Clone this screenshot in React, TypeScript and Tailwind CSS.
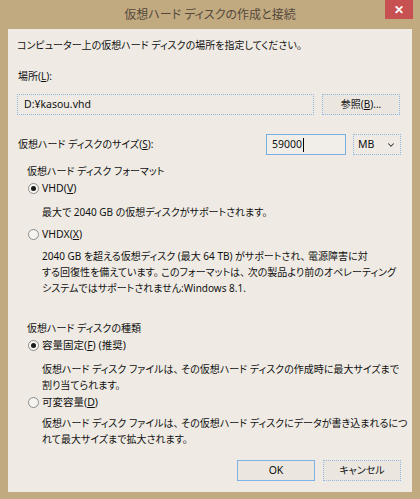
import { ChevronDown } from 'lucide-react';

const font = { fontFamily: '"Noto Sans", "Noto Sans CJK JP", sans-serif' };

function Radio({ checked, label, u, rest }: { checked: boolean; label: string; u: string; rest: string }) {
  return (
    <div className="flex items-center h-[17px] pl-[11px]">
      <span className="w-[11px] h-[11px] rounded-full border border-[#8a8a8a] bg-[#f7f5f1] flex items-center justify-center">
        {checked && <span className="w-[5px] h-[5px] rounded-full bg-[#1a1a1a]" />}
      </span>
      <span className="ml-[3px] text-[10.5px]">
        {label}(<span className="underline">{u}</span>){rest}
      </span>
    </div>
  );
}

function Line({ children }: { children: React.ReactNode }) {
  return <div className="h-[16px] leading-[16px] pl-[25px] whitespace-nowrap">{children}</div>;
}

export default function App() {
  return (
    <div
      style={font}
      className="w-[420px] h-[499px] bg-[#c2aa80] flex flex-col text-[10px] text-[#111] [font-feature-settings:'palt'] overflow-hidden"
    >
      {/* title bar */}
      <div className="h-[29px] flex items-start">
        <div className="flex-1 h-[29px] flex items-center justify-center pl-[35px] text-[12px] text-[#54493d]">
          仮想ハード ディスクの作成と接続
        </div>
        <div className="w-[28px] h-[19px] mr-[7px] bg-[#c75050] flex items-center justify-center text-white text-[12px] font-bold">
          ✕
        </div>
      </div>

      {/* body */}
      <div className="mx-[8px] h-[463px] bg-[#efebe4] flex flex-col pl-[9px] pr-[11px]">
        <div className="mt-[8px] h-[17px] leading-[17px] whitespace-nowrap">
          コンピューター上の仮想ハード ディスクの場所を指定してください。
        </div>

        <div className="mt-[14px] h-[17px] leading-[17px] pl-[1px]">
          場所(<span className="underline">L</span>):
        </div>

        <div className="mt-[9px] flex h-[21px] gap-[8px]">
          <div className="w-[297px] border border-dotted border-[#8fb9e3] bg-[#efebe4] flex items-center pl-[6px] text-[10.5px]">
            D:¥kasou.vhd
          </div>
          <div className="w-[78px] border border-dotted border-[#8fb9e3] bg-[#ebe7e0] flex items-center justify-center">
            参照(<span className="underline">B</span>)...
          </div>
        </div>

        <div className="mt-[19px] flex h-[21px] items-center">
          <div className="flex-1 pl-[1px]">
            仮想ハード ディスクのサイズ(<span className="underline">S</span>):
          </div>
          <div className="w-[80px] h-[21px] border border-[#78b0e6] bg-[#f1eee9] flex items-center pl-[5px] text-[10.5px]">
            59000<span className="w-[1px] h-[14px] bg-black ml-[1px]" />
          </div>
          <div className="ml-[7px] w-[48px] h-[21px] border border-dotted border-[#8fb9e3] flex items-center pl-[4px] pr-[4px] justify-between text-[10.5px]">
            <span>MB</span>
            <ChevronDown size={10} strokeWidth={2.5} className="text-[#333]" />
          </div>
        </div>

        <div className="mt-[8px] h-[17px] leading-[17px] pl-[10px]">仮想ハード ディスク フォーマット</div>
        <Radio checked label="VHD" u="V" rest="" />
        <div className="mt-[7px] h-[17px] leading-[17px] pl-[25px]">最大で 2040 GB の仮想ディスクがサポートされます。</div>
        <div className="mt-[5px]">
          <Radio checked={false} label="VHDX" u="X" rest="" />
        </div>
        <div className="mt-[5px]">
          <Line>2040 GB を超える仮想ディスク (最大 64 TB) がサポートされ、 電源障害に対</Line>
          <Line>する回復性を備えています。 このフォーマットは、 次の製品より前のオペレーティング</Line>
          <Line>システムではサポートされません:Windows 8.1.</Line>
        </div>

        <div className="mt-[24px] h-[17px] leading-[17px] pl-[10px]">仮想ハード ディスクの種類</div>
        <Radio checked label="容量固定" u="F" rest=" (推奨)" />
        <div className="mt-[7px]">
          <Line>仮想ハード ディスク ファイルは、 その仮想ハード ディスクの作成時に最大サイズまで</Line>
          <Line>割り当てられます。</Line>
        </div>
        <div className="mt-[1px]">
          <Radio checked={false} label="可変容量" u="D" rest="" />
        </div>
        <div className="mt-[4px]">
          <Line>仮想ハード ディスク ファイルは、 その仮想ハード ディスクにデータが書き込まれるにつ</Line>
          <Line>れて最大サイズまで拡大されます。</Line>
        </div>

        <div className="mt-auto mb-[11px] flex justify-end gap-[8px]">
          <div className="w-[78px] h-[21px] border border-[#7fb2e5] bg-[#ebe7e0] flex items-center justify-center text-[10.5px]">OK</div>
          <div className="w-[78px] h-[21px] border border-dotted border-[#8fb9e3] bg-[#ebe7e0] flex items-center justify-center">
            キャンセル
          </div>
        </div>
      </div>
      <div className="flex-1" />
    </div>
  );
}
